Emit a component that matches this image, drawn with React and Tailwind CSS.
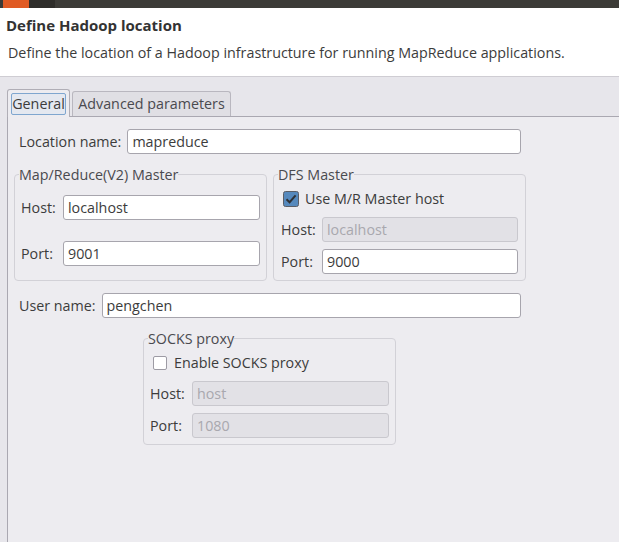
import React from 'react';

const font = { fontFamily: '"Open Sans", "Noto Sans", sans-serif' };

const Field = ({ value, disabled, className = '' }) => (
  <div
    className={`h-[25px] flex items-center px-[4px] rounded-[3px] border text-[14.3px] ${
      disabled
        ? 'bg-[#e2e1e6] border-[#c9c8ce] text-[#a9a8ae]'
        : 'bg-white border-[#a7a5ad] text-[#3c3c3c]'
    } ${className}`}
  >
    {value}
  </div>
);

const Checkbox = ({ checked }) =>
  checked ? (
    <svg width="16" height="16" viewBox="0 0 16 16" className="shrink-0">
      <rect x="0.5" y="0.5" width="15" height="15" rx="2" fill="#5689bd" stroke="#5b5e66" />
      <path d="M3.5 8.2 L6.6 11.2 L12.6 4.4" fill="none" stroke="#2f3237" strokeWidth="2" />
    </svg>
  ) : (
    <div className="w-[14px] h-[14px] shrink-0 rounded-[2px] border border-[#9d9ba4] bg-white" />
  );

const Group = ({ title, className = '', children }) => (
  <fieldset className={`border border-[#d2d1d7] rounded-[4px] ${className}`}>
    <legend className="ml-[4px] text-[14.3px] leading-[17px] text-[#4a4a4f]">{title}</legend>
    {children}
  </fieldset>
);

export default function App() {
  return (
    <div className="w-[619px] h-[542px] overflow-hidden bg-[#e7e6eb] text-[#3c3c3c]" style={font}>
      <div className="h-[8px] bg-[#3c3b37] flex">
        <div className="ml-[3px] w-[26px] bg-[#e05b24]" />
        <div className="w-[26px] bg-[#2e2d2a]" />
      </div>

      <div className="bg-white h-[69px] border-b border-[#cfcdd3] pt-[7px]">
        <div className="pl-[6px] text-[15px] font-bold leading-[20px] text-[#333]">Define Hadoop location</div>
        <div className="pl-[8px] mt-[8px] text-[14.3px] leading-[20px] text-[#3c3c3c]">
          Define the location of a Hadoop infrastructure for running MapReduce applications.
        </div>
      </div>

      <div className="pt-[11px] pl-[7px]">
        <div className="flex items-end h-[28px]">
          <div className="w-[63px] h-[28px] border border-b-0 border-[#b0aeb6] rounded-t-[3px] bg-[#edecf0] px-[3px] pt-[3px] relative z-10 -mb-px">
            <div className="h-[22px] flex items-center justify-center rounded-[2px] border border-[#7fa6cf] bg-[#e4e8f0] text-[14.3px]">
              General
            </div>
          </div>
          <div className="ml-[2px] w-[159px] h-[25px] border border-b-0 border-[#b9b7bf] rounded-t-[3px] bg-[#e0dfe4] flex items-center justify-center text-[14.3px] text-[#4a4a4f]">
            Advanced parameters
          </div>
        </div>

        <div className="h-[427px] bg-[#edecf0] border-t border-l border-[#aaa8b1] pl-[6px] pt-[12px]">
          <div className="w-[512px] px-[5px] flex items-center">
            <span className="text-[14.3px]">Location name:</span>
            <Field value="mapreduce" className="ml-[6px] flex-1" />
          </div>

          <div className="mt-[12px] grid grid-cols-[253px_253px] gap-[6px]">
            <Group title="Map/Reduce(V2) Master" className="h-[115px]">
              <div className="px-[6px]">
                <div className="mt-[12px] flex items-center">
                  <span className="w-[42px] text-[14.3px]">Host:</span>
                  <Field value="localhost" className="flex-1" />
                </div>
                <div className="mt-[21px] flex items-center">
                  <span className="w-[42px] text-[14.3px]">Port:</span>
                  <Field value="9001" className="flex-1" />
                </div>
              </div>
            </Group>

            <Group title="DFS Master" className="h-[115px]">
              <div className="px-[7px]">
                <div className="mt-[5px] ml-[2px] flex items-center gap-[6px]">
                  <Checkbox checked />
                  <span className="text-[14.3px]">Use M/R Master host</span>
                </div>
                <div className="mt-[8px] flex items-center">
                  <span className="w-[41px] text-[14.3px]">Host:</span>
                  <Field value="localhost" disabled className="flex-1" />
                </div>
                <div className="mt-[7px] flex items-center">
                  <span className="w-[41px] text-[14.3px]">Port:</span>
                  <Field value="9000" className="flex-1" />
                </div>
              </div>
            </Group>
          </div>

          <div className="mt-[12px] w-[512px] px-[5px] flex items-center">
            <span className="text-[14.3px]">User name:</span>
            <Field value="pengchen" className="ml-[6px] flex-1" />
          </div>

          <Group title="SOCKS proxy" className="mt-[12px] ml-[129px] w-[253px] h-[115px]">
            <div className="px-[6px]">
              <div className="mt-[5px] ml-[3px] flex items-center gap-[7px]">
                <Checkbox />
                <span className="text-[14.3px]">Enable SOCKS proxy</span>
              </div>
              <div className="mt-[8px] flex items-center">
                <span className="w-[42px] text-[14.3px]">Host:</span>
                <Field value="host" disabled className="flex-1" />
              </div>
              <div className="mt-[7px] flex items-center">
                <span className="w-[42px] text-[14.3px]">Port:</span>
                <Field value="1080" disabled className="flex-1" />
              </div>
            </div>
          </Group>
        </div>
      </div>
    </div>
  );
}
